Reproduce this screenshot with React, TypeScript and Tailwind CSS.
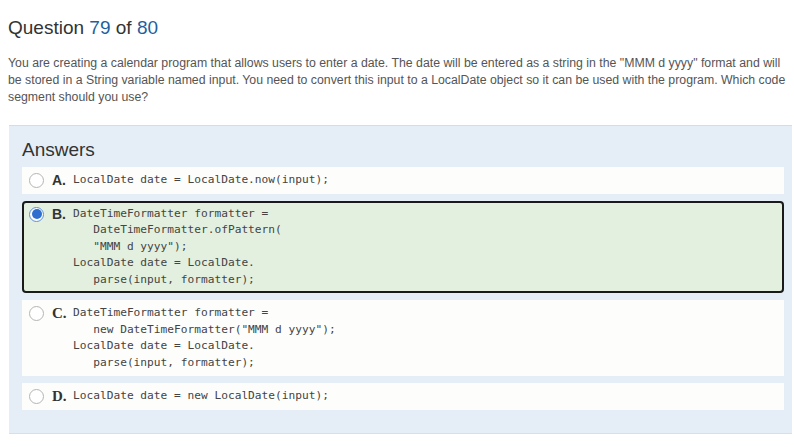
import React from "react";

type Answer = {
  letter: string;
  lines: string[];
  selected?: boolean;
  serif?: boolean;
};

const answers: Answer[] = [
  { letter: "A.", lines: ["LocalDate date = LocalDate.now(input);"] },
  {
    letter: "B.",
    selected: true,
    lines: [
      "DateTimeFormatter formatter =",
      "   DateTimeFormatter.ofPattern(",
      '   "MMM d yyyy");',
      "LocalDate date = LocalDate.",
      "   parse(input, formatter);",
    ],
  },
  {
    letter: "C.",
    serif: true,
    lines: [
      "DateTimeFormatter formatter =",
      '   new DateTimeFormatter("MMM d yyyy");',
      "LocalDate date = LocalDate.",
      "   parse(input, formatter);",
    ],
  },
  { letter: "D.", serif: true, lines: ["LocalDate date = new LocalDate(input);"] },
];

const Radio = ({ checked }: { checked?: boolean }) =>
  checked ? (
    <span className="mt-[1px] flex h-[15px] w-[15px] shrink-0 items-center justify-center rounded-full border border-[#5b8fd6] bg-white">
      <span className="h-[10px] w-[10px] rounded-full bg-[#2f6fcf]" />
    </span>
  ) : (
    <span className="mt-[1px] h-[15px] w-[15px] shrink-0 rounded-full border border-[#b4b4b4] bg-white" />
  );

const Row = ({ a }: { a: Answer }) => (
  <div
    className={
      a.selected
        ? "flex items-start rounded-[4px] border-2 border-[#1a1a1a] bg-[#e3f0df] py-[3px] pl-[5px]"
        : "flex items-start bg-[#fdfefc] py-[5px] pl-[7px]"
    }
  >
    <Radio checked={a.selected} />
    {a.serif ? (
      <span className="ml-[8px] w-[21px] shrink-0 font-['Liberation_Serif'] text-[15px] leading-[16.5px] font-bold text-[#333]">
        {a.letter}
      </span>
    ) : (
      <span className="ml-[8px] w-[21px] shrink-0 font-['Liberation_Sans'] text-[14px] leading-[16.5px] font-bold text-[#333]">
        {a.letter}
      </span>
    )}
    <pre className="font-['DejaVu_Sans_Mono'] text-[11.2px] leading-[16.5px] text-[#444]">
      {a.lines.join("\n")}
    </pre>
  </div>
);

export default function App() {
  return (
    <div className="min-h-[447px] w-[794px] bg-white pt-[15px] font-['Liberation_Sans']">
      <h1 className="pl-[8px] font-['Liberation_Sans'] text-[19px] leading-[26px] text-[#333]">
        Question <span className="text-[#1f5f9e]">79</span> of{" "}
        <span className="text-[#1f5f9e]">80</span>
      </h1>
      <p className="mt-[14px] pl-[8px] pr-[6px] font-['Liberation_Sans'] text-[12.3px] leading-[17px] text-[#555]">
        You are creating a calendar program that allows users to enter a date. The date will be
        entered as a string in the "MMM d yyyy" format and will be stored in a String variable named
        input. You need to convert this input to a LocalDate object so it can be used with the
        program. Which code segment should you use?
      </p>
      <div className="mt-[19px] ml-[9px] w-[783px] border-t border-[#cfdeea] bg-[#e5eef6] pt-[11px] pr-[8px] pb-[23px] pl-[13px] shadow-[0_1px_0_#d5e1ea]">
        <h2 className="font-['Liberation_Sans'] text-[19px] leading-[26px] text-[#333]">Answers</h2>
        <div className="mt-[4px] flex flex-col gap-[7px]">
          {answers.map((a) => (
            <Row key={a.letter} a={a} />
          ))}
        </div>
      </div>
    </div>
  );
}
